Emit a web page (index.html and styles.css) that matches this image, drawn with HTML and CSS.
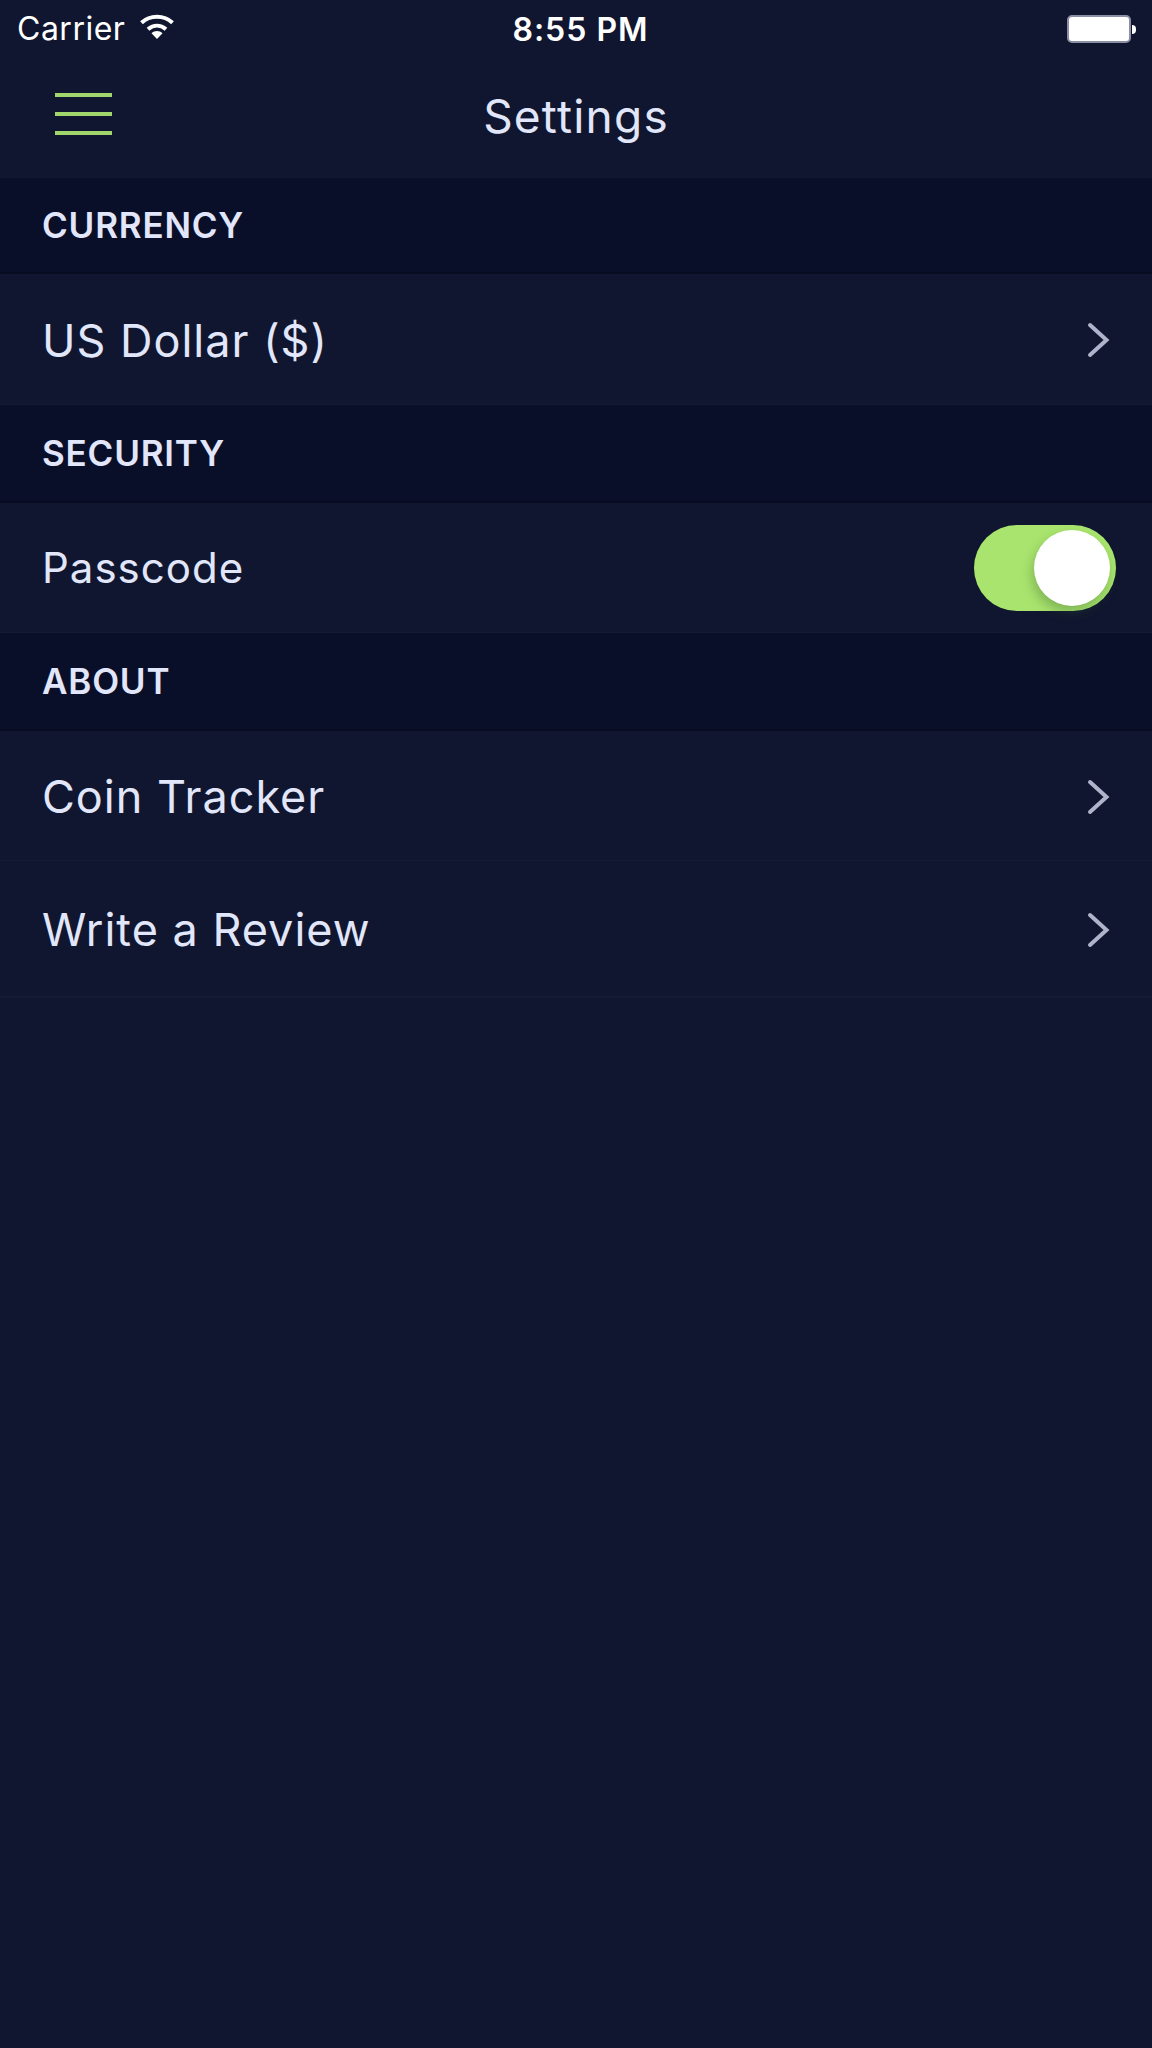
FILE: index.html
```html
<!DOCTYPE html>
<html lang="en">
<head>
<meta charset="utf-8">
<title>Settings</title>
<link rel="stylesheet" href="styles.css">
</head>
<body>
<div class="app">
  <div class="status">
    <div class="status-left">
      <span class="carrier">Carrier</span>
      <svg class="wifi" width="36" height="26" viewBox="0 0 36 26"><path d="M2.500 8.800C11 .8 25 .8 33.500 8.800" fill="none" stroke="#fff" stroke-width="4"/><path d="M9 15.200C14.500 10.500 21.500 10.500 27 15.200" fill="none" stroke="#fff" stroke-width="4"/><path d="M12.500 19.200C15.500 16.400 20.500 16.400 23.500 19.200L18 25Z" fill="#fff"/></svg>
    </div>
    <span class="time">8:55 PM</span>
    <div class="battery"><div class="battery-body"></div><div class="battery-cap"></div></div>
  </div>
  <header class="nav">
    <div class="menu"><span></span><span></span><span></span></div>
    <h1 class="title">Settings</h1>
  </header>
  <h2 class="section sec-first">CURRENCY</h2>
  <div class="row row-currency"><span>US Dollar ($)</span>
    <svg class="chev" width="26" height="40" viewBox="0 0 26 40"><path d="M6 5L22.500 20 6 35" fill="none" stroke="#b0b4ca" stroke-width="4" stroke-linecap="round"/></svg>
  </div>
  <h2 class="section">SECURITY</h2>
  <div class="row row-pass"><span>Passcode</span>
    <div class="toggle"><div class="knob"></div></div>
  </div>
  <h2 class="section">ABOUT</h2>
  <div class="row row-coin"><span>Coin Tracker</span>
    <svg class="chev" width="26" height="40" viewBox="0 0 26 40"><path d="M6 5L22.500 20 6 35" fill="none" stroke="#b0b4ca" stroke-width="4" stroke-linecap="round"/></svg>
  </div>
  <div class="row row-review"><span>Write a Review</span>
    <svg class="chev" width="26" height="40" viewBox="0 0 26 40"><path d="M6 5L22.500 20 6 35" fill="none" stroke="#b0b4ca" stroke-width="4" stroke-linecap="round"/></svg>
  </div>
</div>
</body>
</html>
```
FILE: styles.css
```css
* { box-sizing: border-box; margin: 0; padding: 0; }
html, body { background: #10162f; }
body { font-family: Inter, "Noto Sans", sans-serif; color: #e2e6fa; }
.app { width: 1152px; height: 2048px; background: #10162f; overflow: hidden; display: flex; flex-direction: column; }
.status { height: 58px; padding: 0 16px 0 17px; display: grid; grid-template-columns: 1fr auto 1fr; align-items: center; color: #fff; }
.status-left { display: flex; align-items: center; gap: 14px; }
.carrier { font-size: 32px; font-weight: 400; line-height: 58px; letter-spacing: 0.5px; }
.wifi { margin-top: -4px; }
.time { font-size: 32px; font-weight: 600; letter-spacing: 1px; margin-left: 8px; }
.battery { justify-self: end; display: flex; align-items: center; }
.battery-body { width: 64px; height: 28px; border-radius: 5px; background: #fff; border: 2px solid #8b8fa4; }
.battery-cap { width: 4px; height: 9px; margin-left: 1px; background: #fff; border-radius: 0 4px 4px 0; }
.nav { height: 120px; position: relative; display: flex; align-items: center; justify-content: center; padding-bottom: 4px; }
.menu { position: absolute; left: 55px; top: 35px; width: 57px; display: flex; flex-direction: column; gap: 15.500px; }
.menu span { height: 3.500px; background: #a0d66c; }
.title { font-size: 46px; font-weight: 400; letter-spacing: 1.200px; color: #e2e6fa; }
.section { height: 98px; padding: 0 42px; background: #0a0f29; display: flex; align-items: center; font-size: 35px; font-weight: 600; letter-spacing: 0.800px; border-bottom: 2px solid #080c20; color: #e2e6fa; }
.sec-first { height: 96px; padding-bottom: 1px; }
.row { height: 130px; padding: 2px 42px 0 42px; display: flex; align-items: center; justify-content: space-between; font-size: 45px; font-weight: 400; letter-spacing: 1px; color: #e2e6fa; border-bottom: 1px solid #131a36; }
.row-currency { height: 131px; }
.row-review { height: 137px; border-bottom: 2px solid #151b37; }
.row-pass { padding: 0 36px 0 42px; }
.row-pass span { font-size: 42px; letter-spacing: 1px; }
.toggle { width: 142px; height: 86px; border-radius: 43px; background: #a9e56e; position: relative; }
.knob { position: absolute; right: 6px; top: 5px; width: 76px; height: 76px; border-radius: 50%; background: #fff; box-shadow: -2px 6px 12px rgba(50,90,40,.35); }
```
